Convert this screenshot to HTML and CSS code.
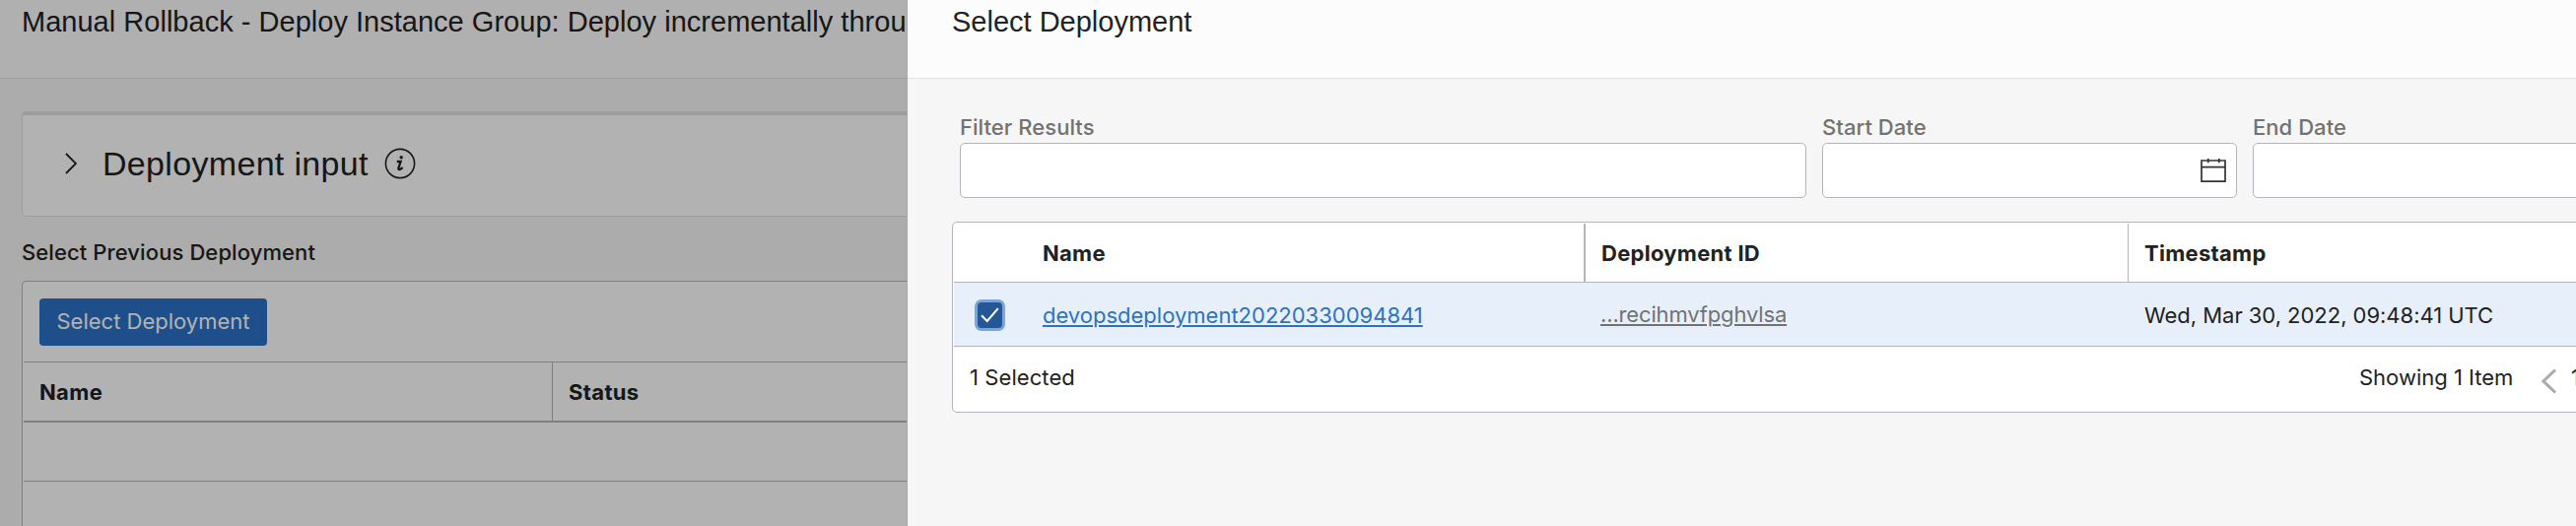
FILE: index.html
```html
<!DOCTYPE html>
<html lang="en">
<head>
<meta charset="utf-8">
<title>Select Deployment</title>
<link rel="stylesheet" href="styles.css">
</head>
<body>
<div class="screen">
  <main class="page">
    <header class="bar"><h1 class="title page-title">Manual Rollback - Deploy Instance Group: Deploy incrementally throu</h1></header>
    <div class="page-body">
      <section class="card">
        <svg class="chevron" width="12" height="22" viewBox="0 0 12 22"><path d="M1 1L11 11L1 21"/></svg>
        <h2 class="card-title">Deployment input</h2>
        <svg class="info" width="32" height="32" viewBox="0 0 32 32"><circle cx="16" cy="16" r="14.6"/><circle class="fill" cx="17.2" cy="9.8" r="1.7"/><path d="M12.8 14H16.6L14.4 20.6C13.9 22.8 16.2 22.4 18.6 20"/></svg>
      </section>
      <div class="section-label">Select Previous Deployment</div>
      <section class="list">
        <div class="toolbar"><button class="button">Select Deployment</button></div>
        <div class="list-head"><div class="cell-name">Name</div><div class="cell-status">Status</div></div>
        <div class="list-row"></div>
        <div class="list-rest"></div>
      </section>
    </div>
    <div class="scrim"></div>
  </main>
  <aside class="panel">
    <header class="bar"><h1 class="title panel-title">Select Deployment</h1></header>
    <div class="panel-body">
      <div class="filters">
        <div class="field"><label class="label">Filter Results</label><div class="input"></div></div>
        <div class="field"><label class="label">Start Date</label><div class="input">
          <svg class="calendar" width="26" height="26" viewBox="0 0 26 26"><path d="M1 3H25V24.2H1ZM1 9.7H25M7.8 1V5.2M18.8 1V5.2"/></svg>
        </div></div>
        <div class="field"><label class="label">End Date</label><div class="input"></div></div>
      </div>
      <section class="table">
        <div class="row head">
          <div></div><div class="th th-name">Name</div><div class="th th-id">Deployment ID</div><div class="th th-time">Timestamp</div>
        </div>
        <div class="row selected">
          <div><span class="checkbox"><svg width="19" height="16" viewBox="0 0 19 16"><path d="M1 8.2L6.7 14L17.8 1.2"/></svg></span></div>
          <div><a class="link">devopsdeployment20220330094841</a></div>
          <div class="td-id"><a class="link muted">...recihmvfpghvlsa</a></div>
          <div class="td-time">Wed, Mar 30, 2022, 09:48:41 UTC</div>
        </div>
        <div class="footer">
          <span class="count">1 Selected</span>
          <div class="pager"><span class="showing">Showing 1 Item</span>
            <svg class="prev" width="16" height="26" viewBox="0 0 16 26"><path d="M14 1.5L2 13L14 24.5"/></svg>
            <span>1</span></div>
        </div>
      </section>
    </div>
  </aside>
</div>
</body>
</html>
```
FILE: styles.css
```css
* { box-sizing: border-box; }
body { margin: 0; font-family: Inter, "Liberation Sans", sans-serif; font-size: 22px; line-height: 32px; color: #222; white-space: nowrap; overflow: hidden; }
h1, h2 { margin: 0; font-weight: 400; font-family: "Liberation Sans", Arial, sans-serif; }
svg { display: block; flex: none; fill: none; stroke: #222; }
.screen { display: grid; grid-template-columns: 920px 1694px; width: 2614px; height: 534px; overflow: hidden; }
.bar { height: 80px; padding: 6px 0 0 22px; background: #fcfcfc; border-bottom: 1px solid #e2e2e2; }
.title { font-size: 29px; line-height: 32px; }

/* Page under the dialog */
.page { position: relative; background: #f6f6f6; overflow: hidden; }
.page-title { letter-spacing: 0.02px; }
.scrim { position: absolute; inset: 0; background: rgba(0, 0, 0, 0.3); }
.page-body { padding: 33px 0 0 22px; }
.card { display: flex; align-items: center; height: 107px; padding: 0 0 4px 43px; background: #fff; border: 1px solid #dfe0e2; border-top: 4px solid #dee0e3; border-right: 0; border-radius: 5px 0 0 5px; }
.chevron { stroke-width: 1.8; }
.card-title { margin-left: 26px; font-size: 34px; line-height: 40px; letter-spacing: 0.32px; }
.info { margin-left: 16px; stroke-width: 1.6; }
.info path { stroke-width: 2.3; }
.info .fill { fill: #222; stroke: none; }
.section-label { height: 65px; padding: 20px 0 0 0; font-weight: 500; letter-spacing: 0.1px; }
.list { height: 260px; padding-left: 1px; background: #fff; border: solid #b3b6bc; border-width: 1px 0 0 1px; border-radius: 5px 0 0; }
.toolbar { height: 82px; padding: 17px 0 0 16px; border-bottom: 1px solid #b3b6bc; }
.button { display: block; width: 231px; height: 48px; padding: 0 0 2px; border: 0; border-radius: 4px; background: #2c72c7; color: #fff; font: inherit; }
.list-head { display: grid; grid-template-columns: 537px 1fr; height: 61px; border-bottom: 2px solid #b3b6bc; font-weight: 700; letter-spacing: 0.35px; line-height: 60px; }
.cell-name { padding-left: 16px; border-right: 1px solid #b3b6bc; }
.cell-status { padding-left: 16px; }
.list-row { height: 60px; border-bottom: 1px solid #b3b6bc; }

/* Dialog */
.panel { background: #f6f6f6; border-left: 1px solid #a8a8a8; overflow: hidden; }
.panel .bar { padding-left: 45px; }
.panel-body { padding: 33px 0 0 45px; }
.filters { display: grid; grid-template-columns: 859px 421px 421px; gap: 16px; padding-left: 8px; }
.label { display: block; height: 32px; color: #727272; font-weight: 500; letter-spacing: 0.05px; }
.input { height: 56px; padding: 14px 10px; background: #fff; border: 1px solid #b3b6bc; border-radius: 5px; }
.calendar { margin-left: auto; stroke-width: 1.7; stroke: #333; }
.table { width: 1760px; height: 194px; margin-top: 24px; padding-left: 1px; background: #fff; border: 1px solid #b3b6bc; border-radius: 5px; }
.row { display: grid; grid-template-columns: 90px 551px 551px 1fr; }
.head { height: 61px; padding-top: 1px; border-bottom: 1px solid #b3b6bc; font-weight: 700; letter-spacing: 0.28px; line-height: 60px; }
.th-name { border-right: 2px solid #b3b6bc; }
.th-id { padding-left: 16px; border-right: 1px solid #b3b6bc; }
.th-time { padding-left: 16px; }
.selected { height: 65px; background: #e7f0fa; border-bottom: 1px solid #b3b6bc; line-height: 66px; }
.checkbox { display: flex; align-items: center; justify-content: center; width: 25px; height: 26px; margin: 20px 0 0 24px; background: #245796; border-radius: 4px; box-shadow: 0 0 0 3px #7ba4dc; }
.checkbox svg { stroke: #fff; stroke-width: 2; }
.link { color: #2c72c7; text-decoration: underline; text-decoration-thickness: 2px; text-underline-offset: 2px; }
.muted { color: #727272; letter-spacing: -0.15px; }
.td-id { padding-left: 15px; line-height: 65px; }
.td-time { padding-left: 16px; letter-spacing: -0.03px; }
.footer { display: grid; grid-template-columns: 1426px 1fr; line-height: 62px; }
.count { padding-left: 16px; letter-spacing: 0.08px; }
.pager { display: flex; }
.showing { width: 185px; }
.prev { margin: 22px 14px 0 0; stroke: #aaa; stroke-width: 3; }
```
